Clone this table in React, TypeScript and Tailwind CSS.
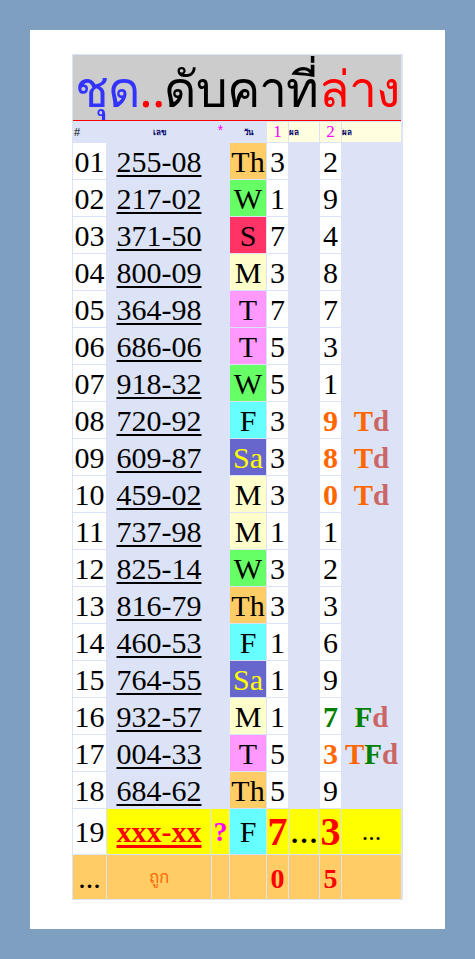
import React from 'react';

type Row = {
  no: string;
  num: string;
  day: 'Th' | 'W' | 'S' | 'M' | 'T' | 'F' | 'Sa';
  a: string;
  b: string;
  bColor?: string;
  mark?: React.ReactNode;
};

const DAY_BG: Record<Row['day'], string> = {
  Th: 'bg-[#ffcc66] text-black',
  W: 'bg-[#66ff66] text-black',
  S: 'bg-[#ff3366] text-black',
  M: 'bg-[#ffffcc] text-black',
  T: 'bg-[#ff99ff] text-black',
  F: 'bg-[#66ffff] text-black',
  Sa: 'bg-[#6666cc] text-[#ffff00]',
};

const Td = () => (
  <>
    <span className="text-[#ff6600]">T</span>
    <span className="text-[#cc6666]">d</span>
  </>
);

const rows: Row[] = [
  { no: '01', num: '255-08', day: 'Th', a: '3', b: '2' },
  { no: '02', num: '217-02', day: 'W', a: '1', b: '9' },
  { no: '03', num: '371-50', day: 'S', a: '7', b: '4' },
  { no: '04', num: '800-09', day: 'M', a: '3', b: '8' },
  { no: '05', num: '364-98', day: 'T', a: '7', b: '7' },
  { no: '06', num: '686-06', day: 'T', a: '5', b: '3' },
  { no: '07', num: '918-32', day: 'W', a: '5', b: '1' },
  { no: '08', num: '720-92', day: 'F', a: '3', b: '9', bColor: 'text-[#ff6600] font-bold', mark: <Td /> },
  { no: '09', num: '609-87', day: 'Sa', a: '3', b: '8', bColor: 'text-[#ff6600] font-bold', mark: <Td /> },
  { no: '10', num: '459-02', day: 'M', a: '3', b: '0', bColor: 'text-[#ff6600] font-bold', mark: <Td /> },
  { no: '11', num: '737-98', day: 'M', a: '1', b: '1' },
  { no: '12', num: '825-14', day: 'W', a: '3', b: '2' },
  { no: '13', num: '816-79', day: 'Th', a: '3', b: '3' },
  { no: '14', num: '460-53', day: 'F', a: '1', b: '6' },
  { no: '15', num: '764-55', day: 'Sa', a: '1', b: '9' },
  {
    no: '16', num: '932-57', day: 'M', a: '1', b: '7', bColor: 'text-[#008000] font-bold',
    mark: (
      <>
        <span className="text-[#008000]">F</span>
        <span className="text-[#cc6666]">d</span>
      </>
    ),
  },
  {
    no: '17', num: '004-33', day: 'T', a: '5', b: '3', bColor: 'text-[#ff6600] font-bold',
    mark: (
      <>
        <span className="text-[#ff6600]">T</span>
        <span className="text-[#008000]">F</span>
        <span className="text-[#cc6666]">d</span>
      </>
    ),
  },
  { no: '18', num: '684-62', day: 'Th', a: '5', b: '9' },
];

const cell = 'flex items-center justify-center overflow-visible whitespace-nowrap';

export default function App() {
  return (
    <div className="min-h-[959px] w-[475px] bg-[#7f9fc1] p-[30px] font-['Liberation_Serif',serif]">
      <div className="h-[899px] w-[415px] bg-white pl-[42px] pt-[24px]">
        <div className="grid w-[331px] grid-cols-[33px_104px_17px_36px_21px_30px_21px_59px] gap-px bg-[#dce3f6] p-px text-black">
          {/* title */}
          <div className="col-span-8 flex h-[66px] items-end justify-center overflow-hidden whitespace-nowrap border-b border-[#ff0000] bg-[#cccccc] font-['Tahoma','Noto_Sans',sans-serif] text-[50px] leading-[63px] tracking-[-0.8px]">
            <span className="text-[#3333ff]">ชุด</span>
            <span className="text-[#ff0000]">..</span>
            <span className="text-black">ดับคาที่</span>
            <span className="text-[#ff0000]">ล่าง</span>
          </div>

          {/* header row */}
          <div className="flex h-[20px] items-center pl-[1px] text-[11px] font-['Liberation_Sans',sans-serif]">#</div>
          <div className={`${cell} h-[20px] font-['Noto_Sans',sans-serif] text-[8px] font-bold text-[#000066]`}>เลข</div>
          <div className={`${cell} h-[20px] pb-[3px] font-['Liberation_Sans',sans-serif] text-[14px] text-[#ff00ff]`}>*</div>
          <div className={`${cell} h-[20px] font-['Noto_Sans',sans-serif] text-[8px] font-bold text-[#000066]`}>วัน</div>
          <div className={`${cell} h-[20px] bg-[#ffffe0] text-[17px] text-[#ff00ff]`}>1</div>
          <div className="flex h-[20px] items-center bg-[#ffffe0] font-['Noto_Sans',sans-serif] text-[8px] font-bold text-[#000066]">ผล</div>
          <div className={`${cell} h-[20px] bg-[#ffffe0] text-[17px] text-[#ff00ff]`}>2</div>
          <div className="flex h-[20px] items-center bg-[#ffffe0] font-['Noto_Sans',sans-serif] text-[8px] font-bold text-[#000066]">ผล</div>

          {rows.map(r => (
            <React.Fragment key={r.no}>
              <div className={`${cell} h-[36px] bg-white text-[30px]`}>{r.no}</div>
              <div className={`${cell} h-[36px] text-[30px]`}>
                <span className="underline decoration-[2px] underline-offset-[3px]">{r.num}</span>
              </div>
              <div className="h-[36px]" />
              <div className={`${cell} h-[36px] text-[30px] ${DAY_BG[r.day]}`}>{r.day}</div>
              <div className={`${cell} h-[36px] bg-white text-[30px]`}>{r.a}</div>
              <div className="h-[36px]" />
              <div className={`${cell} h-[36px] bg-white text-[30px] ${r.bColor ?? ''}`}>{r.b}</div>
              <div className={`${cell} h-[36px] pt-[3px] text-[29px] font-bold`}>{r.mark}</div>
            </React.Fragment>
          ))}

          {/* row 19 */}
          <div className={`${cell} h-[45px] bg-white text-[30px]`}>19</div>
          <div className={`${cell} h-[45px] bg-[#ffff00] text-[30px] font-bold text-[#ff0000]`}>
            <span className="underline decoration-[3px] underline-offset-[3px]">xxx-xx</span>
          </div>
          <div className={`${cell} h-[45px] bg-[#ffff00] text-[28px] font-bold text-[#ff00ff]`}>?</div>
          <div className={`${cell} h-[45px] bg-[#66ffff] text-[30px]`}>F</div>
          <div className={`${cell} h-[45px] bg-[#ffff00] text-[40px] font-bold text-[#ff0000]`}>7</div>
          <div className={`${cell} h-[45px] items-end bg-[#ffff00] pb-[6px] text-[28px] font-bold leading-none`}>…</div>
          <div className={`${cell} h-[45px] bg-[#ffff00] text-[40px] font-bold text-[#ff0000]`}>3</div>
          <div className={`${cell} h-[45px] bg-[#ffff00] text-[26px]`}>...</div>

          {/* last row */}
          <div className={`${cell} h-[44px] bg-[#ffcc66] text-[30px]`}>...</div>
          <div className={`${cell} h-[44px] bg-[#ffcc66] font-['Noto_Sans',sans-serif] text-[17px] text-[#ff6600]`}>ถูก</div>
          <div className="h-[44px] bg-[#ffcc66]" />
          <div className="h-[44px] bg-[#ffcc66]" />
          <div className={`${cell} h-[44px] bg-[#ffcc66] pt-[4px] text-[28px] font-bold text-[#ff0000]`}>0</div>
          <div className="h-[44px] bg-[#ffcc66]" />
          <div className={`${cell} h-[44px] bg-[#ffcc66] pt-[4px] text-[28px] font-bold text-[#ff0000]`}>5</div>
          <div className="h-[44px] bg-[#ffcc66]" />
        </div>
      </div>
    </div>
  );
}
